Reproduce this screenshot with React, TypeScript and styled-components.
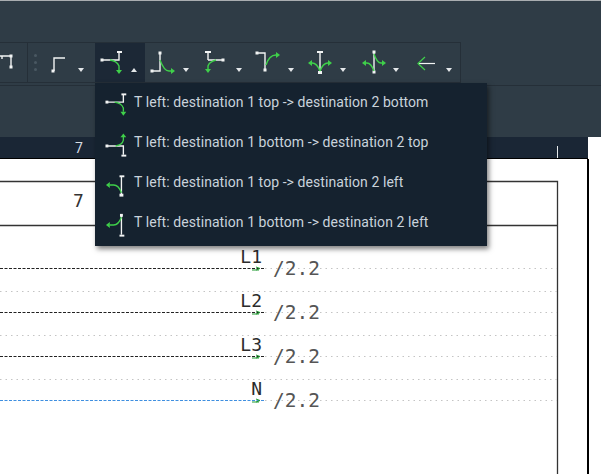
import styled, { createGlobalStyle } from "styled-components";

const WHITE = "#f2f4f4";
const GREEN = "#3fd04a";

const GlobalStyle = createGlobalStyle`
  html, body {
    margin: 0;
    padding: 0;
    background: #fff;
    overflow: hidden;
  }
`;

function Cap({ x, y, size = 3 }: { x: number; y: number; size?: number }) {
  return <rect x={x - size / 2} y={y - size / 2} width={size} height={size} fill={WHITE} />;
}

function Wire({ d }: { d: string }) {
  return <path d={d} fill="none" stroke={WHITE} strokeWidth={1.4} />;
}

function Branch({ d }: { d: string }) {
  return <path d={d} fill="none" stroke={GREEN} strokeWidth={1.4} />;
}

function Head({ x, y, dir }: { x: number; y: number; dir: "up" | "down" | "left" | "right" }) {
  const points = {
    up: `${x},${y} ${x - 3},${y + 4} ${x + 3},${y + 4}`,
    down: `${x},${y} ${x - 3},${y - 4} ${x + 3},${y - 4}`,
    left: `${x},${y} ${x + 4},${y - 3} ${x + 4},${y + 3}`,
    right: `${x},${y} ${x - 4},${y - 3} ${x - 4},${y + 3}`,
  }[dir];
  return <polygon points={points} fill={GREEN} />;
}

function IconSvg({ children }: { children: React.ReactNode }) {
  return (
    <svg width="30" height="26" viewBox="0 0 30 26">
      {children}
    </svg>
  );
}

const icons: Record<string, React.ReactNode> = {
  corner: (
    <>
      <Wire d="M6 21V8H17" />
      <Cap x={5} y={21} />
    </>
  ),
  topBottom: (
    <>
      <Wire d="M2 10H19V2" />
      <Cap x={2} y={10} />
      <rect x={17} y={1} width={5} height={2} fill={WHITE} />
      <Branch d="M10 10Q17 11 19 16V20" />
      <Head x={19} y={24} dir="down" />
    </>
  ),
  bottomTop: (
    <>
      <Wire d="M2 14H19V23" />
      <Cap x={2} y={14} />
      <rect x={17} y={23} width={5} height={2} fill={WHITE} />
      <Branch d="M11 14Q18 13 19 8V4" />
      <Head x={19} y={1} dir="up" />
    </>
  ),
  topLeft: (
    <>
      <Wire d="M17 4V23" />
      <rect x={15} y={3} width={5} height={2} fill={WHITE} />
      <rect x={15} y={22} width={4} height={3} fill={WHITE} />
      <Branch d="M17 21Q14 13 9 13H5" />
      <Head x={1} y={13} dir="left" />
    </>
  ),
  bottomLeft: (
    <>
      <Wire d="M17 3V23" />
      <Cap x={17} y={3} />
      <rect x={15} y={23} width={5} height={2} fill={WHITE} />
      <Branch d="M17 5Q14 13 9 13H5" />
      <Head x={1} y={13} dir="left" />
    </>
  ),
  rightBottom: (
    <>
      <Wire d="M10 3V21H2" />
      <Cap x={2} y={21} />
      <Cap x={10} y={3} />
      <Branch d="M10 10Q14 21 19 21H21" />
      <Head x={25} y={21} dir="right" />
    </>
  ),
  rightTop: (
    <>
      <Wire d="M5 10V2M5 10H20" />
      <Cap x={20} y={10} />
      <rect x={2} y={1} width={6} height={2} fill={WHITE} />
      <Branch d="M13 10Q6 12 5 16V19" />
      <Head x={5} y={23} dir="down" />
    </>
  ),
  elbow: (
    <>
      <Wire d="M3 3H10V20" />
      <Cap x={2} y={3} />
      <Cap x={10} y={20} />
      <Branch d="M11 15Q14 5 21 5" />
      <Head x={25} y={5} dir="right" />
    </>
  ),
  fork: (
    <>
      <Wire d="M13 2V22" />
      <rect x={10} y={1} width={6} height={2} fill={WHITE} />
      <rect x={11} y={21} width={4} height={3} fill={WHITE} />
      <Branch d="M13 21Q10 13 5 13" />
      <Branch d="M13 21Q16 13 21 13" />
      <Head x={1} y={13} dir="left" />
      <Head x={25} y={13} dir="right" />
    </>
  ),
  cross: (
    <>
      <Wire d="M13 2V22" />
      <Cap x={13} y={2} />
      <Cap x={13} y={22} />
      <Branch d="M13 21Q10 13 6 13H5" />
      <Branch d="M13 4Q16 13 20 13H21" />
      <Head x={1} y={13} dir="left" />
      <Head x={25} y={13} dir="right" />
    </>
  ),
  arrow: (
    <>
      <path d="M3 13.5H19" fill="none" stroke={WHITE} strokeWidth={1.2} />
      <path d="M9 7L2 13.5L9 20" fill="none" stroke={GREEN} strokeWidth={1.2} />
    </>
  ),
};

const tools = [
  { icon: "corner", width: 53, offset: 6, caret: 39 },
  { icon: "topBottom", width: 50, offset: 5, caret: 39, active: true },
  { icon: "rightBottom", width: 52, offset: 5, caret: 41 },
  { icon: "rightTop", width: 53, offset: 6, caret: 42 },
  { icon: "elbow", width: 52, offset: 5, caret: 41 },
  { icon: "fork", width: 53, offset: 5, caret: 41 },
  { icon: "cross", width: 53, offset: 6, caret: 41 },
  { icon: "arrow", width: 48, offset: 8, caret: 41 },
];

const menuItems = [
  { icon: "topBottom", label: "T left: destination 1 top -> destination 2 bottom" },
  { icon: "bottomTop", label: "T left: destination 1 bottom -> destination 2 top" },
  { icon: "topLeft", label: "T left: destination 1 top -> destination 2 left" },
  { icon: "bottomLeft", label: "T left: destination 1 bottom -> destination 2 left" },
];

const wires = [
  { name: "L1", y: 109, color: "#222" },
  { name: "L2", y: 153, color: "#222" },
  { name: "L3", y: 197, color: "#222" },
  { name: "N", y: 241, color: "#3f8fe0" },
];

export default function App() {
  return (
    <>
      <GlobalStyle />
      <Frame>
        <TitleBand />
        <ToolRow>
          <Toolbar>
            <PartialIcon>
              <svg width="14" height="26" viewBox="0 0 14 26">
                <Wire d="M0 5H11V16" />
                <Wire d="M2 5V8" />
                <Cap x={11} y={5} />
                <Cap x={11} y={16} />
              </svg>
            </PartialIcon>
            <Grip>
              <GripDot />
              <GripDot />
              <GripDot />
            </Grip>
            {tools.map((tool) => (
              <ToolButton key={tool.icon} $width={tool.width} $active={tool.active} $offset={tool.offset}>
                <IconSvg>{icons[tool.icon]}</IconSvg>
                <Caret $up={tool.active} $center={tool.caret} />
              </ToolButton>
            ))}
          </Toolbar>
        </ToolRow>
        <SubBand />
        <Ruler>
          <RulerNumber>7</RulerNumber>
          <RulerTick />
        </Ruler>
        <Sheet>
          <Wires width="588" height="316" viewBox="0 0 588 316">
            <path d="M0 22.5H557.5V316" fill="none" stroke="#333" strokeWidth={1.3} />
            <path d="M0 66.5H557" fill="none" stroke="#333" strokeWidth={1.3} />
            {[132, 176, 220].map((y) => (
              <path key={y} d={`M0 ${y + 0.5}H557`} stroke="#c4c4c4" strokeDasharray="1.5 4" />
            ))}
            {wires.map((w) => (
              <g key={w.name}>
                <path d={`M265 ${w.y + 0.5}H557`} stroke="#c4c4c4" strokeDasharray="1.5 4" />
                <path d={`M0 ${w.y + 0.5}H264`} stroke={w.color} strokeWidth={1.2} strokeDasharray="3 1.5" />
                <path d={`M252 ${w.y + 2}H259M256 ${w.y - 1}L260 ${w.y + 0.5}L256 ${w.y + 2}`} fill="none" stroke="#1f9a30" />
              </g>
            ))}
          </Wires>
          <SheetNumber>7</SheetNumber>
          {wires.map((w) => (
            <WireRow key={w.name} $y={w.y}>
              <WireName>{w.name}</WireName>
              <WireRef>/2.2</WireRef>
            </WireRow>
          ))}
        </Sheet>
        <Menu>
          {menuItems.map((item) => (
            <MenuItem key={item.label}>
              <MenuIcon>
                <IconSvg>{icons[item.icon]}</IconSvg>
              </MenuIcon>
              <MenuLabel>{item.label}</MenuLabel>
            </MenuItem>
          ))}
        </Menu>
      </Frame>
    </>
  );
}

const Frame = styled.div`
  position: relative;
  width: 601px;
  height: 474px;
  overflow: hidden;
  background: #fff;
  font-family: Roboto, "Liberation Sans", sans-serif;
`;

const TitleBand = styled.div`
  height: 41px;
  background: #2f3c46;
  border-top: 1px solid #a9adb0;
`;

const ToolRow = styled.div`
  height: 43px;
  background: #2f3c46;
  border-bottom: 1px solid #252f38;
`;

const Toolbar = styled.div`
  display: flex;
  align-items: stretch;
  width: 461px;
  height: 41px;
  box-sizing: border-box;
  background: #2f3c46;
  border: 1px solid #252f38;
  border-left: none;
`;

const PartialIcon = styled.div`
  width: 27px;
  padding-top: 8px;
  border-right: 1px solid #252f38;
`;

const Grip = styled.div`
  width: 14px;
  display: flex;
  flex-direction: column;
  align-items: center;
  gap: 4px;
  padding-top: 11px;
`;

const GripDot = styled.span`
  width: 3px;
  height: 3px;
  border-radius: 50%;
  background: #4a5862;
`;

const ToolButton = styled.div<{ $width: number; $active?: boolean; $offset: number }>`
  display: flex;
  width: ${(p) => p.$width}px;
  box-sizing: border-box;
  padding: 7px 0 0 ${(p) => p.$offset}px;
  background: ${(p) => (p.$active ? "#1c2836" : "transparent")};
  position: relative;
`;

const Caret = styled.span<{ $up?: boolean; $center: number }>`
  position: absolute;
  left: ${(p) => p.$center - 3}px;
  top: 25px;
  width: 0;
  height: 0;
  border-left: 3px solid transparent;
  border-right: 3px solid transparent;
  ${(p) => (p.$up ? "border-bottom: 4px solid #e4e8ea;" : "border-top: 4px solid #e4e8ea;")}
`;

const SubBand = styled.div`
  height: 51px;
  background: #2f3c46;
`;

const Ruler = styled.div`
  position: relative;
  width: 588px;
  height: 21px;
  background: #1a2635;
  border-bottom: 1px solid #000;
`;

const RulerNumber = styled.span`
  position: absolute;
  left: 75px;
  top: 3px;
  font-size: 14px;
  line-height: 16px;
  color: #d7dde2;
`;

const RulerTick = styled.span`
  position: absolute;
  left: 557px;
  top: 9px;
  width: 1px;
  height: 12px;
  background: #e6e9ea;
`;

const Sheet = styled.div`
  position: relative;
  width: 587px;
  height: 315px;
  border-right: 2px solid #000;
  background: #fff;
  font-family: "DejaVu Sans Mono", monospace;
`;

const Wires = styled.svg`
  position: absolute;
  left: 0;
  top: 0;
`;

const SheetNumber = styled.span`
  position: absolute;
  left: 73px;
  top: 31px;
  font-size: 18px;
  line-height: 22px;
  color: #333;
`;

const WireRow = styled.div<{ $y: number }>`
  position: absolute;
  top: ${(p) => p.$y}px;
  left: 0;
`;

const WireName = styled.span`
  position: absolute;
  right: -262px;
  top: -22px;
  font-size: 18px;
  line-height: 22px;
  color: #2b2b2b;
  white-space: nowrap;
`;

const WireRef = styled.span`
  position: absolute;
  left: 273px;
  top: -10px;
  font-size: 19.5px;
  line-height: 22px;
  color: #555;
  white-space: nowrap;
`;

const Menu = styled.div`
  position: absolute;
  left: 95px;
  top: 83px;
  width: 392px;
  height: 163px;
  box-sizing: border-box;
  padding: 0 0 0 10px;
  display: flex;
  flex-direction: column;
  background: #15222f;
  box-shadow: 2px 3px 5px rgba(0, 0, 0, 0.5);
`;

const MenuItem = styled.div`
  display: flex;
  align-items: center;
  height: 40px;
`;

const MenuIcon = styled.div`
  display: flex;
  width: 29px;
  margin-top: 3px;
`;

const MenuLabel = styled.span`
  font-size: 14px;
  letter-spacing: 0.07px;
  margin-bottom: 2px;
  color: #c9d3dc;
  white-space: nowrap;
`;
